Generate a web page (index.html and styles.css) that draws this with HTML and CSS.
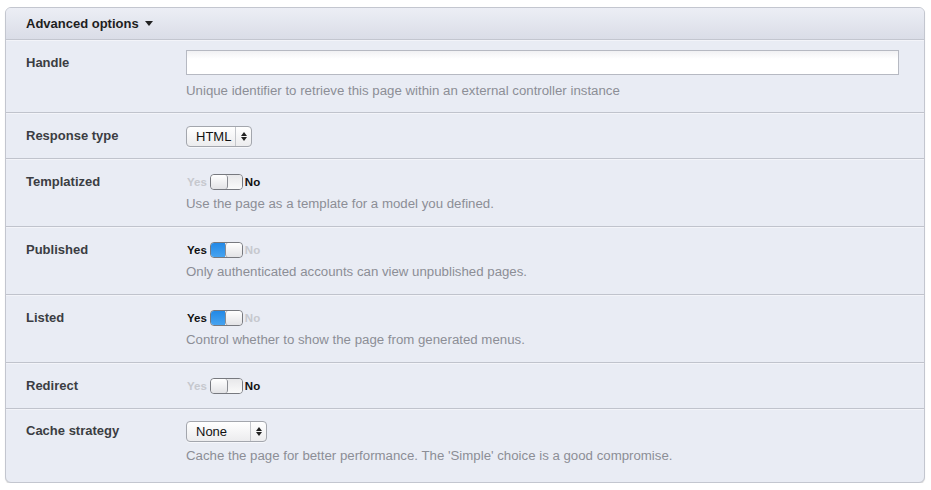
FILE: index.html
```html
<!DOCTYPE html>
<html>
<head>
<meta charset="utf-8">
<link rel="stylesheet" href="styles.css">
</head>
<body>
<div class="panel">
  <div class="panel-head">Advanced options <span class="caret"></span></div>

  <div class="row row-handle has-desc">
    <div class="label">Handle</div>
    <div class="field">
      <div class="control"><input class="text-input" type="text"></div>
      <div class="desc">Unique identifier to retrieve this page within an external controller instance</div>
    </div>
  </div>

  <div class="row">
    <div class="label">Response type</div>
    <div class="field">
      <div class="control"><div class="select sel-html"><span class="sel-text">HTML</span><span class="sel-arrows"><span class="up"></span><span class="down"></span></span></div></div>
    </div>
  </div>

  <div class="row has-desc">
    <div class="label">Templatized</div>
    <div class="field">
      <div class="control"><span class="yn dim">Yes</span><span class="switch off"><span class="knob"></span><span class="track"></span></span><span class="yn">No</span></div>
      <div class="desc">Use the page as a template for a model you defined.</div>
    </div>
  </div>

  <div class="row has-desc">
    <div class="label">Published</div>
    <div class="field">
      <div class="control"><span class="yn">Yes</span><span class="switch on"><span class="fill"></span><span class="knob"></span></span><span class="yn dim">No</span></div>
      <div class="desc">Only authenticated accounts can view unpublished pages.</div>
    </div>
  </div>

  <div class="row has-desc">
    <div class="label">Listed</div>
    <div class="field">
      <div class="control"><span class="yn">Yes</span><span class="switch on"><span class="fill"></span><span class="knob"></span></span><span class="yn dim">No</span></div>
      <div class="desc">Control whether to show the page from generated menus.</div>
    </div>
  </div>

  <div class="row">
    <div class="label">Redirect</div>
    <div class="field">
      <div class="control"><span class="yn dim">Yes</span><span class="switch off"><span class="knob"></span><span class="track"></span></span><span class="yn">No</span></div>
    </div>
  </div>

  <div class="row row-last">
    <div class="label">Cache strategy</div>
    <div class="field">
      <div class="control"><div class="select sel-none"><span class="sel-text">None</span><span class="sel-arrows"><span class="up"></span><span class="down"></span></span></div></div>
      <div class="desc">Cache the page for better performance. The 'Simple' choice is a good compromise.</div>
    </div>
  </div>
</div>
</body>
</html>
```

FILE: styles.css
```css
html, body {
  margin: 0;
  background: #ffffff;
}
body {
  padding: 7px 6px 0 5px;
  font-family: "Liberation Sans", Arial, Helvetica, sans-serif;
  font-size: 13px;
  color: #333;
}
.panel {
  border: 1px solid #c3c6cf;
  border-radius: 6px;
  background: #e9ecf4;
  overflow: hidden;
  box-shadow: 0 1px 1px rgba(0,0,0,0.15);
}
.panel-head {
  display: flex;
  align-items: center;
  height: 31px;
  padding-left: 20px;
  font-weight: bold;
  font-size: 13px;
  color: #1e1e1e;
  background: linear-gradient(#eceef5, #dadde7);
  border-bottom: 1px solid #c3c6cf;
}
.caret {
  width: 0;
  height: 0;
  margin-left: 6px;
  border-left: 4px solid transparent;
  border-right: 4px solid transparent;
  border-top: 5px solid #222;
}
.row {
  display: grid;
  grid-template-columns: 160px 1fr;
  padding: 12px 25px 11px 20px;
  border-bottom: 1px solid #c0c3cc;
  box-shadow: inset 0 1px 0 #f3f4f9;
}
.row.has-desc {
  padding-bottom: 13px;
}
.row-handle {
  padding-top: 10px;
}
.row.row-handle {
  padding-bottom: 12px;
}
.row.row-last {
  border-bottom: none;
  padding-top: 11px;
  padding-bottom: 17px;
}
.label {
  font-weight: bold;
  color: #3b3d42;
  line-height: 22px;
}
.row-handle .label {
  line-height: 25px;
}
.control {
  display: flex;
  align-items: center;
  height: 22px;
}
.row-handle .control {
  height: 25px;
}
.text-input {
  box-sizing: border-box;
  width: 100%;
  height: 25px;
  margin: 0;
  border: 1px solid #b6b9c2;
  background: linear-gradient(#f1f1f3, #ffffff 8px);
  outline: none;
}
.desc {
  color: #8c8e96;
  font-size: 13.25px;
  line-height: 18px;
  margin-top: 2px;
}
.row-handle .desc {
  margin-top: 7px;
}
.row-last .desc {
  margin-top: 5px;
}
.select {
  box-sizing: border-box;
  height: 21px;
  display: flex;
  align-items: stretch;
  border: 1px solid #a3a6ad;
  border-radius: 4px;
  background: linear-gradient(#ffffff, #ececee);
  box-shadow: 0 1px 0 rgba(255,255,255,0.6);
}
.sel-html { width: 66px; }
.sel-none { width: 81px; }
.sel-text {
  flex: 1;
  line-height: 19px;
  padding-left: 9px;
  color: #111;
  font-size: 13px;
}
.sel-arrows {
  width: 15px;
  border-left: 1px solid #c4c6cb;
  display: flex;
  flex-direction: column;
  align-items: center;
  justify-content: center;
  gap: 1px;
}
.up {
  width: 0; height: 0;
  border-left: 3px solid transparent;
  border-right: 3px solid transparent;
  border-bottom: 4px solid #222;
}
.down {
  width: 0; height: 0;
  border-left: 3px solid transparent;
  border-right: 3px solid transparent;
  border-top: 4px solid #222;
}
.yn {
  font-size: 11.5px;
  font-weight: bold;
  color: #111;
}
.yn:first-child {
  margin-left: 1px;
}
.yn.dim {
  color: #c6c8ce;
}
.switch {
  box-sizing: border-box;
  width: 33px;
  height: 16px;
  margin: 0 2px 0 3px;
  display: flex;
  border: 1px solid #77797f;
  border-radius: 4px;
  overflow: hidden;
  background: #f4f4f5;
}
.knob {
  width: 16px;
  background: linear-gradient(#ffffff, #e3e3e6);
  border-radius: 3px;
}
.switch.off .knob {
  border-right: 1px solid #8a8c92;
}
.switch.on .knob {
  border-left: 1px solid #8a8c92;
}
.track {
  flex: 1;
  background: linear-gradient(#e8e8ea, #fafafa);
}
.fill {
  flex: 1;
  background: linear-gradient(#2389e6, #46a3f0);
}
```
